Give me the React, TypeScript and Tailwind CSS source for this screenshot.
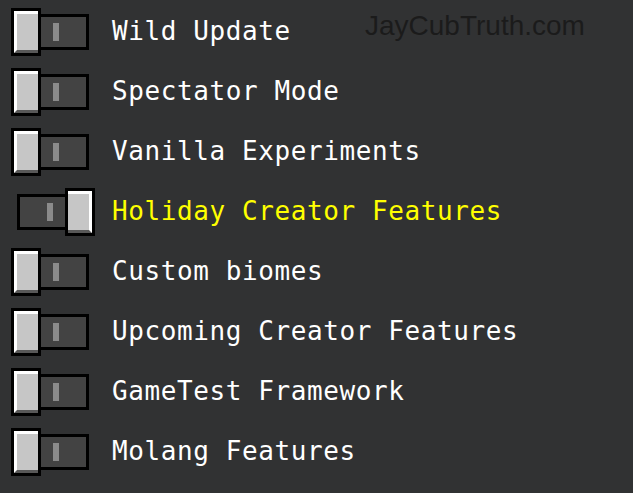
import React from 'react'

// experimental toggles list
const experiments = [
  { name: 'Wild Update', on: false },
  { name: 'Spectator Mode', on: false },
  { name: 'Vanilla Experiments', on: false },
  { name: 'Holiday Creator Features', on: true },
  { name: 'Custom biomes', on: false },
  { name: 'Upcoming Creator Features', on: false },
  { name: 'GameTest Framework', on: false },
  { name: 'Molang Features', on: false },
]

function Knob({ on }: { on: boolean }) {
  return (
    <div className="relative z-10 w-[30px] h-[48px] border-[3px] border-black bg-black shrink-0">
      <div
        className={`w-full h-full bg-[#c6c6c6] border-t-[3px] border-b-[3px] border-t-white border-b-[#585858] ${
          on ? 'border-r-[3px] border-r-white' : 'border-l-[3px] border-l-white'
        }`}
      ></div>
    </div>
  )
}

function Track({ on }: { on: boolean }) {
  return (
    <div
      className={`w-[51px] h-[36px] border-[3px] border-black bg-[#434343] flex items-center shrink-0 ${
        on ? 'justify-end pr-[12px]' : 'justify-start pl-[12px]'
      }`}
    >
      <div className="w-[6px] h-[18px] bg-[#8b8b8b]"></div>
    </div>
  )
}

function Toggle({ on }: { on: boolean }) {
  return (
    <div className="w-[84px] h-[48px] flex items-center shrink-0">
      {on ? (
        <>
          <div className="ml-[6px]">
            <Track on />
          </div>
          <div className="-ml-[3px]">
            <Knob on />
          </div>
        </>
      ) : (
        <>
          <Knob on={false} />
          <div className="-ml-[3px]">
            <Track on={false} />
          </div>
        </>
      )}
    </div>
  )
}

export default function App() {
  return (
    <div className="relative w-[633px] h-[493px] bg-[#313233] overflow-hidden">
      {/* Watermark */}
      <div className="absolute left-[365px] top-[8px] text-[28px] leading-[36px] text-[#1b1b1b] font-['Liberation_Sans',Arial,sans-serif]">
        JayCubTruth.com
      </div>

      <div className="flex flex-col pt-[2px] pl-[11px]">
        {experiments.map((exp) => (
          <div key={exp.name} className="h-[60px] flex items-center gap-[17px]">
            <Toggle on={exp.on} />
            <span
              className={`text-[26px] leading-[26px] tracking-[0.6px] pb-[3px] whitespace-nowrap font-['DejaVu_Sans_Mono',monospace] ${
                exp.on ? 'text-[#ffff00]' : 'text-white'
              }`}
            >
              {exp.name}
            </span>
          </div>
        ))}
      </div>
    </div>
  )
}
